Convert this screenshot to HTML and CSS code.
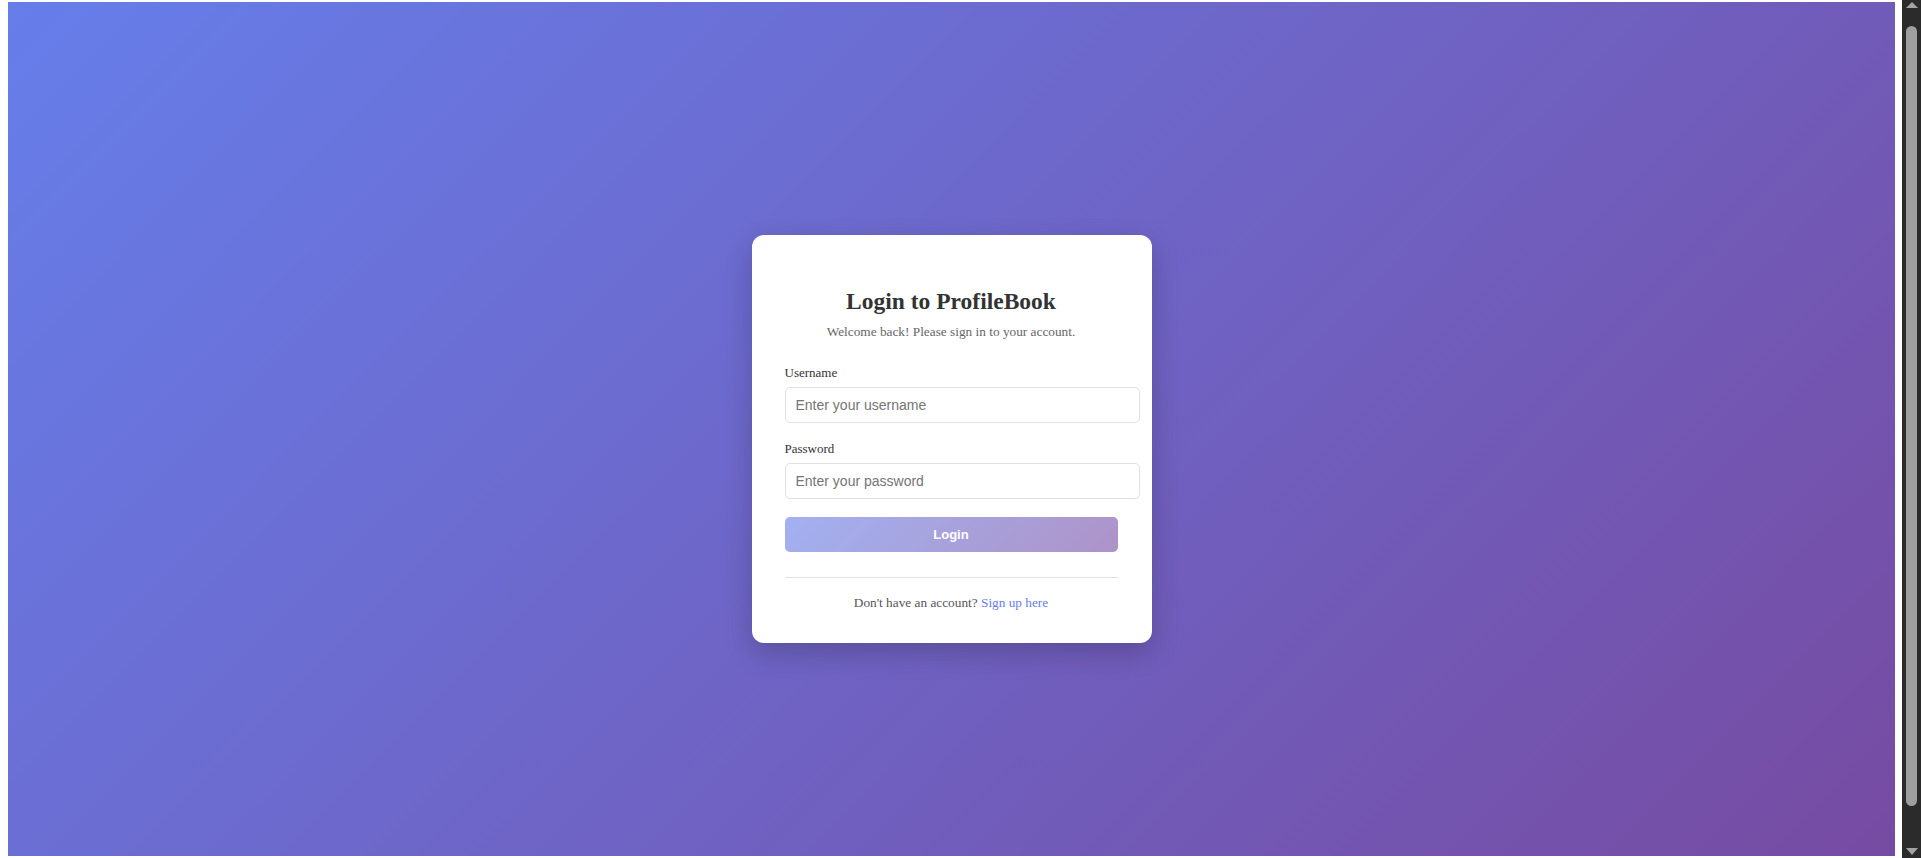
FILE: index.html
```html
<!DOCTYPE html>
<html lang="en">
<head>
<meta charset="utf-8">
<title>Login to ProfileBook</title>
<link rel="stylesheet" href="styles.css">
</head>
<body>
<div class="viewport">
  <main class="stage">
    <div class="card">
      <h2 class="title">Login to ProfileBook</h2>
      <p class="subtitle">Welcome back! Please sign in to your account.</p>
      <form class="form">
        <div class="group">
          <label class="label" for="username">Username</label>
          <input class="input" id="username" type="text" placeholder="Enter your username">
        </div>
        <div class="group">
          <label class="label" for="password">Password</label>
          <input class="input" id="password" type="password" placeholder="Enter your password">
        </div>
        <button class="btn" type="button" disabled>Login</button>
      </form>
      <div class="footer">Don't have an account? <a class="link" href="#">Sign up here</a></div>
    </div>
  </main>
  <div class="scrollbar">
    <span class="arrow arrow-up"></span>
    <span class="thumb"></span>
    <span class="arrow arrow-down"></span>
  </div>
</div>
</body>
</html>
```

FILE: styles.css
```css
html, body {
  margin: 0;
  padding: 0;
  height: 858px;
  overflow: hidden;
  background: #ffffff;
}

body {
  font-family: "Liberation Serif", "Times New Roman", serif;
}

.viewport {
  display: flex;
  height: 858px;
}

.stage {
  flex: 1;
  margin: 2px 7px 2px 8px;
  padding-top: 20px;
  display: flex;
  justify-content: center;
  align-items: center;
  background: linear-gradient(135deg, #667eea 0%, #764ba2 100%);
}

.card {
  width: 333px;
  padding: 32px 34px 32px 33px;
  background: #ffffff;
  border-radius: 12px;
  box-shadow: 0 10px 28px rgba(0, 0, 0, 0.2);
}

.title {
  margin: 21px 0 9px;
  font-size: 23.5px;
  font-weight: bold;
  color: #333333;
  text-align: center;
}

.subtitle {
  margin: 0 0 25px;
  font-size: 13.3px;
  color: #666666;
  text-align: center;
}

.form {
  margin: 0;
}

.group {
  margin-bottom: 18.5px;
}

.label {
  display: block;
  margin-bottom: 5.5px;
  font-size: 13px;
  color: #333333;
}

.input {
  display: block;
  width: 333px;
  margin: 0;
  padding: 9px 10px;
  border: 1px solid #e1e1e1;
  border-radius: 5px;
  font-family: "Liberation Sans", Arial, sans-serif;
  font-size: 14px;
  color: #333333;
  background: #ffffff;
  outline: none;
}

.input::placeholder {
  color: #757575;
}

.btn {
  display: block;
  width: 100%;
  margin: 0;
  padding: 10px;
  border: none;
  border-radius: 5px;
  background: linear-gradient(135deg, #667eea 0%, #764ba2 100%);
  color: #ffffff;
  font-family: "Liberation Sans", Arial, sans-serif;
  font-size: 13px;
  font-weight: bold;
  opacity: 0.6;
}

.footer {
  margin-top: 25px;
  padding-top: 17px;
  border-top: 1px solid #e1e1e1;
  font-size: 13.3px;
  color: #555555;
  text-align: center;
}

.link {
  color: #667eea;
  text-decoration: none;
}

.scrollbar {
  width: 19px;
  background: #2b2b2b;
  display: flex;
  flex-direction: column;
  align-items: center;
}

.arrow {
  width: 0;
  height: 0;
  border-left: 6px solid transparent;
  border-right: 6px solid transparent;
}

.arrow-up {
  margin-top: 2px;
  border-bottom: 6px solid #a3a3a3;
}

.thumb {
  width: 11px;
  height: 780px;
  margin-top: 18px;
  border-radius: 6px;
  background: #9f9f9f;
}

.arrow-down {
  margin-top: auto;
  margin-bottom: 3px;
  border-top: 7px solid #a3a3a3;
}
```
